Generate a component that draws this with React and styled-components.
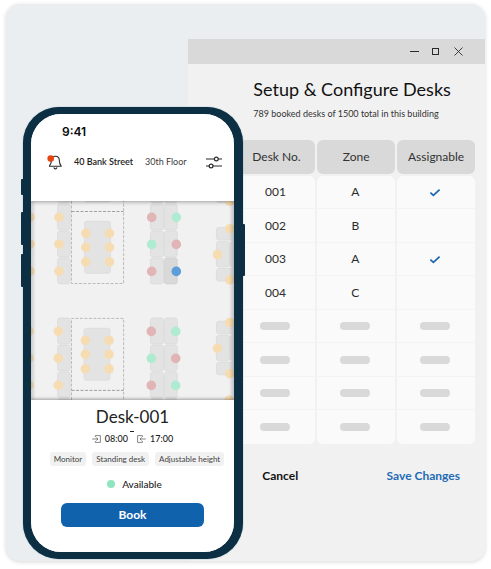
import React from "react";
import styled, { createGlobalStyle } from "styled-components";

const GlobalStyle = createGlobalStyle`
  *, *::before, *::after { box-sizing: border-box; }
  body {
    margin: 0;
    background: #ffffff;
    font-family: Lato, "Open Sans", sans-serif;
    color: #1c1c1c;
  }
  button { font-family: inherit; cursor: pointer; }
`;

const Page = styled.main`
  padding: 4px 6px 9px;
`;

const Stage = styled.section`
  display: grid;
  grid-template-columns: 17fr 165fr 55fr 242fr;
  border-radius: 14px;
  background: #eaeef1;
  box-shadow: 0 1px 4px rgba(0, 0, 0, 0.16);
`;

/* Desktop window */

const DesktopWindow = styled.section`
  grid-area: 1 / 3 / 2 / 5;
  margin-top: 35px;
  display: flex;
  flex-direction: column;
  background: #f1f1f1;
  border-radius: 0 0 14px 0;
`;

const TitleBar = styled.div`
  display: flex;
  align-items: center;
  justify-content: flex-end;
  gap: 8px;
  height: 25px;
  padding-right: 17px;
  background: #d9d9d9;
`;

const IconButton = styled.button`
  display: flex;
  align-items: center;
  justify-content: center;
  padding: 0;
  border: 0;
  background: transparent;
  color: #2b2b2b;
  width: ${(p) => p.$width}px;
  height: ${(p) => p.$height}px;
  flex: none;
`;

const WindowHeading = styled.header`
  padding: 12px 10px 0 22%;
  white-space: nowrap;
`;

const WindowTitle = styled.h1`
  margin: 0;
  font-size: 18px;
  line-height: 26px;
  font-weight: 400;
  color: #111111;
`;

const WindowSubtitle = styled.p`
  margin: 5px 0 0;
  font-size: 9px;
  line-height: 14px;
  color: #333333;
`;

const TableArea = styled.div`
  padding: 19px 8px 0 16%;
`;

const DeskTable = styled.table`
  width: 100%;
  table-layout: fixed;
  border-collapse: separate;
  border-spacing: 2px 0;
`;

const HeadCell = styled.th`
  padding: 0 0 2px;
  font-weight: 400;
`;

const HeadLabel = styled.div`
  height: 34px;
  line-height: 34px;
  border-radius: 6px;
  background: #d9d9d9;
  color: #333333;
  font-size: 12px;
  text-align: center;
  white-space: nowrap;
`;

const BodyRow = styled.tr`
  height: 33px;
  &:nth-child(even) { height: 34px; }
  &:first-child td { border-radius: 6px 6px 0 0; }
  &:last-child td { border-radius: 0 0 6px 6px; border-bottom: 0; }
`;

const BodyCell = styled.td`
  padding: 0 2px 0 0;
  background: #fafafa;
  border-bottom: 1px solid #f3f3f3;
  color: #2b2b2b;
  font-size: 12px;
  line-height: 16px;
  text-align: center;
  vertical-align: middle;
  svg { display: block; margin: 0 auto; }
`;

const Placeholder = styled.div`
  width: 30px;
  height: 8px;
  margin: 0 auto;
  border-radius: 4px;
  background: #d9d9d9;
`;

const WindowActions = styled.footer`
  display: flex;
  justify-content: space-between;
  padding: 22px 25px 75px 25%;
`;

const TextButton = styled.button`
  padding: 0;
  border: 0;
  background: transparent;
  color: ${(p) => p.$color};
  font-size: 12px;
  line-height: 20px;
  font-weight: 700;
  white-space: nowrap;
`;

/* Phone */

const Phone = styled.section`
  grid-area: 1 / 2 / 2 / 4;
  align-self: start;
  position: relative;
  z-index: 1;
  margin-top: 103px;
  padding: 7px 9px 7px 8px;
  border-radius: 36px;
  background: #0d2f43;
  box-shadow: 0 0 1px #31647c;
`;

const SideKey = styled.span`
  position: absolute;
  top: ${(p) => p.$top}px;
  ${(p) => p.$side}: -2px;
  width: 3px;
  height: ${(p) => p.$length}px;
  border-radius: 1px;
  background: #0d2f43;
`;

const Screen = styled.div`
  display: flex;
  flex-direction: column;
  overflow: hidden;
  border-radius: 30px;
  background: #ffffff;
`;

const ScreenTop = styled.header`
  position: relative;
  z-index: 1;
  padding: 10px 12px 29px 16px;
  background: #ffffff;
  box-shadow: 0 1px 4px rgba(0, 0, 0, 0.35);
`;

const Clock = styled.time`
  display: block;
  padding-left: 15px;
  font-family: Inter, sans-serif;
  font-size: 12px;
  line-height: 16px;
  font-weight: 600;
  color: #0a0a0a;
`;

const LocationRow = styled.div`
  display: flex;
  align-items: center;
  gap: 12px;
  margin-top: 12px;
  height: 20px;
`;

const LocationText = styled.span`
  font-size: 9px;
  line-height: 16px;
  font-weight: ${(p) => (p.$strong ? 600 : 400)};
  color: ${(p) => (p.$strong ? "#222222" : "#404040")};
  white-space: nowrap;
`;

const Spacer = styled.span`
  flex: 1;
  margin-right: -12px;
`;

const MapArea = styled.div`
  background: #f1f1f1;
  svg { display: block; width: 100%; height: auto; }
`;

const Details = styled.div`
  position: relative;
  z-index: 1;
  display: flex;
  flex-direction: column;
  align-items: center;
  padding: 5px 10px 25px;
  background: #ffffff;
  box-shadow: 0 -1px 3px rgba(0, 0, 0, 0.35);
`;

const DeskName = styled.h2`
  margin: 0;
  font-size: 17px;
  line-height: 24px;
  font-weight: 400;
  color: #222222;
`;

const TimeRow = styled.div`
  display: flex;
  align-items: center;
  margin-top: 2px;
  height: 16px;
  font-size: 9px;
  line-height: 16px;
  font-weight: 500;
  color: #222222;
`;

const TimeSlot = styled.span`
  display: flex;
  align-items: center;
  gap: 4px;
`;

const TimeDash = styled.span`
  align-self: flex-start;
  width: 4px;
  height: 1px;
  margin: 0 3px 0 2px;
  background: #222222;
`;

const ChipRow = styled.ul`
  display: flex;
  gap: 6px;
  margin: 5px 0 0;
  padding: 0 0 0 9px;
  list-style: none;
`;

const Chip = styled.li`
  padding: 0 4px;
  border-radius: 3px;
  background: #f1f1f1;
  color: #444444;
  font-size: 8px;
  line-height: 14px;
  white-space: nowrap;
`;

const Status = styled.p`
  display: flex;
  align-items: center;
  gap: 7px;
  margin: 10px 0 0;
  padding-left: 4px;
  font-size: 10px;
  line-height: 16px;
  font-weight: 500;
  color: #1c1c1c;
`;

const StatusDot = styled.span`
  width: 8px;
  height: 8px;
  border-radius: 50%;
  background: #8fe5bf;
`;

const BookButton = styled.button`
  width: 78%;
  height: 24px;
  margin-top: 11px;
  padding: 0;
  border: 0;
  border-radius: 6px;
  background: #1162ac;
  color: #ffffff;
  font-size: 12px;
  line-height: 24px;
  font-weight: 700;
`;

const rows = [
  { desk: "001", zone: "A", assignable: true },
  { desk: "002", zone: "B", assignable: false },
  { desk: "003", zone: "A", assignable: true },
  { desk: "004", zone: "C", assignable: false },
  null,
  null,
  null,
  null,
];

const COLORS = {
  amber: "#f6dcb2",
  red: "#e1b4b6",
  green: "#aeebd0",
  blue: "#5d9dda",
};

function Check() {
  return (
    <svg width="12" height="9" viewBox="0 0 12 9" role="img" aria-label="Assignable">
      <path d="M1.4 4.6 4.4 7.4 10.6 1.6" fill="none" stroke="#1a66b3" strokeWidth="1.7" />
    </svg>
  );
}

function BellIcon() {
  return (
    <svg width="15" height="16" viewBox="0 0 15 16" aria-hidden="true">
      <path
        d="M8.4 2.2C5.7 2.2 4.5 4.2 4.5 6.3C4.5 9.4 3.6 10.6 2.4 12.2H14.2C13 10.6 12.3 9.4 12.3 6.3C12.3 4.2 11.1 2.2 8.4 2.2Z"
        fill="none"
        stroke="currentColor"
        strokeWidth="1.1"
        strokeLinejoin="round"
      />
      <path d="M6.9 13.4C7.2 15.3 9.6 15.3 9.9 13.4" fill="none" stroke="currentColor" strokeWidth="1.1" />
      <circle cx="3.7" cy="4.6" r="3.3" fill="#ea4312" />
    </svg>
  );
}

function SlidersIcon() {
  return (
    <svg width="16" height="13" viewBox="0 0 16 13" fill="none" stroke="currentColor" strokeWidth="1.2" aria-hidden="true">
      <path d="M0.5 3H8.2M12.4 3H15.6M0.5 10H3M7.2 10H15.6" strokeLinecap="round" />
      <circle cx="10.3" cy="3" r="1.9" />
      <circle cx="5.1" cy="10" r="1.9" />
    </svg>
  );
}

function EnterIcon() {
  return (
    <svg width="9" height="8" viewBox="0 0 9 8" fill="none" stroke="#555555" strokeWidth="0.7" aria-hidden="true">
      <path d="M3.4 2V0.6H8.4V7.4H3.4V6M0.2 4H6M4.4 2.5 6 4 4.4 5.5" />
    </svg>
  );
}

function LeaveIcon() {
  return (
    <svg width="9" height="8" viewBox="0 0 9 8" fill="none" stroke="#555555" strokeWidth="0.7" aria-hidden="true">
      <path d="M5.4 2V0.6H0.6V7.4H5.4V6M8.8 4H3M4.6 2.5 3 4 4.6 5.5" />
    </svg>
  );
}

function Desk({ x, y, w = 13, h = 26, active = false }) {
  return (
    <rect
      x={x}
      y={y}
      width={w}
      height={h}
      rx="2.5"
      fill={active ? "#d9d9d9" : "#e3e3e3"}
      stroke={active ? "#cfcfcf" : "#dadada"}
      strokeWidth="0.7"
    />
  );
}

function Seat({ x, y, color = "amber" }) {
  return <circle cx={x} cy={y} r="4.8" fill={COLORS[color]} />;
}

const seatColors = [
  ["red", "green"],
  ["green", "red"],
  ["red", "green"],
];

function DeskBlock({ top, selected = false, shift = 0 }) {
  const steps = [0, 27, 54];
  return (
    <g>
      {steps.map((s, i) => (
        <g key={s}>
          <Seat x={30 - shift} y={top + s + 13.3} />
          <Desk x={57.5} y={top + s} w={12.8} />
          <Seat x={59 - shift * 0.7} y={top + s + 13.3} />
          <Desk x={150.4} y={top + s} />
          <Desk x={164.3} y={top + s} active={selected && i === 2} />
          <Seat x={151.7 - shift * 0.4} y={top + s + 13.5} color={seatColors[i][0]} />
          <Seat
            x={176.3 - shift * 0.6}
            y={top + s + 13.5}
            color={selected && i === 2 ? "blue" : seatColors[i][1]}
          />
        </g>
      ))}
    </g>
  );
}

function MeetingTable({ x, y }) {
  return (
    <g>
      <Desk x={x} y={y} w={26} h={52} />
      {[12, 26, 40.5].map((dy) => (
        <g key={dy}>
          <Seat x={x + 1.4} y={y + dy} />
          <Seat x={x + 25} y={y + dy} />
        </g>
      ))}
    </g>
  );
}

function SidePod({ top }) {
  return (
    <g>
      <Desk x={216.4} y={top} w={26} h={12.5} />
      <Desk x={216.4} y={top + 14} h={25.5} />
      <Desk x={230.3} y={top + 14} h={25.5} />
      <Desk x={216.4} y={top + 41} w={26} h={12.5} />
      <Seat x={229.8} y={top + 1.2} />
      <Seat x={217.5} y={top + 27} />
      <Seat x={229.8} y={top + 52.4} />
    </g>
  );
}

function FloorMap() {
  return (
    <svg viewBox="31 201 203 199" role="img" aria-label="Floor plan">
      <defs>
        <linearGradient id="edgeLeft">
          <stop offset="0" stopColor="#000000" stopOpacity="0.16" />
          <stop offset="1" stopColor="#000000" stopOpacity="0" />
        </linearGradient>
        <linearGradient id="edgeRight">
          <stop offset="0" stopColor="#000000" stopOpacity="0" />
          <stop offset="1" stopColor="#000000" stopOpacity="0.2" />
        </linearGradient>
      </defs>
      <rect x="31" y="201" width="203" height="199" fill="#f1f1f1" />
      <Desk x={57.5} y={176.5} w={12.8} />
      <Desk x={150.4} y={176.5} />
      <Desk x={164.3} y={176.5} />
      <Desk x={84.5} y={150} w={26} h={52} />
      <Desk x={216.4} y={190} w={26} h={12.5} />
      <Seat x={229.7} y={201.3} />
      <DeskBlock top={203.9} selected />
      <DeskBlock top={317.9} shift={1} />
      <Desk x={57.5} y={398.9} w={12.8} />
      <Desk x={150.4} y={398.9} />
      <Desk x={164.3} y={398.9} />
      <g fill="none" stroke="#b5b5b5" strokeWidth="0.9" strokeDasharray="3 1.5">
        <path d="M71.5 201V283.5H123.6V201M71.5 400V318.4H123.6V400" />
        <path d="M71.5 211.5H123.6M71.5 390.4H123.6" stroke="#969696" />
      </g>
      <MeetingTable x={84.5} y={221.3} />
      <MeetingTable x={84} y={328.3} />
      <SidePod top={227.5} />
      <SidePod top={321.3} />
      <Seat x={229.2} y={400} />
      <rect x="31" y="201" width="5" height="199" fill="url(#edgeLeft)" />
      <rect x="229" y="201" width="5" height="199" fill="url(#edgeRight)" />
    </svg>
  );
}

function WindowControls() {
  return (
    <TitleBar>
      <IconButton $width={15} $height={15} aria-label="Minimize">
        <svg width="9" height="9" viewBox="0 0 9 9" aria-hidden="true">
          <path d="M0 4.5H9" stroke="currentColor" strokeWidth="1" />
        </svg>
      </IconButton>
      <IconButton $width={10} $height={15} aria-label="Maximize">
        <svg width="7" height="7" viewBox="0 0 7 7" aria-hidden="true">
          <rect x="0.5" y="0.5" width="6" height="6" fill="none" stroke="currentColor" />
        </svg>
      </IconButton>
      <IconButton $width={20} $height={15} aria-label="Close">
        <svg width="9" height="9" viewBox="0 0 9 9" aria-hidden="true">
          <path d="M0.5 0.5 8.5 8.5M8.5 0.5 0.5 8.5" stroke="currentColor" strokeWidth="0.9" />
        </svg>
      </IconButton>
    </TitleBar>
  );
}

function SetupWindow() {
  return (
    <DesktopWindow>
      <WindowControls />
      <WindowHeading>
        <WindowTitle>Setup &amp; Configure Desks</WindowTitle>
        <WindowSubtitle>789 booked desks of 1500 total in this building</WindowSubtitle>
      </WindowHeading>
      <TableArea>
        <DeskTable>
          <thead>
            <tr>
              {["Desk No.", "Zone", "Assignable"].map((label) => (
                <HeadCell key={label} scope="col">
                  <HeadLabel>{label}</HeadLabel>
                </HeadCell>
              ))}
            </tr>
          </thead>
          <tbody>
            {rows.map((row, i) => (
              <BodyRow key={i}>
                <BodyCell>{row ? row.desk : <Placeholder />}</BodyCell>
                <BodyCell>{row ? row.zone : <Placeholder />}</BodyCell>
                <BodyCell>{row ? row.assignable && <Check /> : <Placeholder />}</BodyCell>
              </BodyRow>
            ))}
          </tbody>
        </DeskTable>
      </TableArea>
      <WindowActions>
        <TextButton $color="#111111">Cancel</TextButton>
        <TextButton $color="#1f6bb5">Save Changes</TextButton>
      </WindowActions>
    </DesktopWindow>
  );
}

function BookingPhone() {
  return (
    <Phone>
      <SideKey $side="left" $top={72} $length={16} />
      <SideKey $side="left" $top={105} $length={33} />
      <SideKey $side="left" $top={147} $length={33} />
      <SideKey $side="right" $top={117} $length={52} />
      <Screen>
        <ScreenTop>
          <Clock>9:41</Clock>
          <LocationRow>
            <IconButton $width={15} $height={16} aria-label="Notifications">
              <BellIcon />
            </IconButton>
            <LocationText $strong>40 Bank Street</LocationText>
            <LocationText>30th Floor</LocationText>
            <Spacer />
            <IconButton $width={16} $height={16} aria-label="Filters">
              <SlidersIcon />
            </IconButton>
          </LocationRow>
        </ScreenTop>
        <MapArea>
          <FloorMap />
        </MapArea>
        <Details>
          <DeskName>Desk-001</DeskName>
          <TimeRow>
            <TimeSlot>
              <EnterIcon />
              <time>08:00</time>
            </TimeSlot>
            <TimeDash />
            <TimeSlot>
              <LeaveIcon />
              <time>17:00</time>
            </TimeSlot>
          </TimeRow>
          <ChipRow>
            <Chip>Monitor</Chip>
            <Chip>Standing desk</Chip>
            <Chip>Adjustable height</Chip>
          </ChipRow>
          <Status>
            <StatusDot />
            Available
          </Status>
          <BookButton>Book</BookButton>
        </Details>
      </Screen>
    </Phone>
  );
}

export default function App() {
  return (
    <>
      <GlobalStyle />
      <Page>
        <Stage>
          <SetupWindow />
          <BookingPhone />
        </Stage>
      </Page>
    </>
  );
}
